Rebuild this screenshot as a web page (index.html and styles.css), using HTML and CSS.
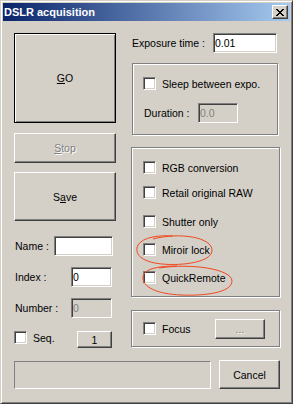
FILE: index.html
```html
<!DOCTYPE html>
<html lang="en">
<head>
    <meta charset="UTF-8">
    <title>DSLR acquisition</title>
    <link rel="stylesheet" href="styles.css">
</head>
<body>

<div class="fenster">
    <div class="titelleiste">
        <span class="titel">DSLR acquisition</span>
        <button class="schliessen" type="button">
            <svg width="8" height="7" viewBox="0 0 8 7"><path d="M0 0h2v1h-2zM6 0h2v1h-2zM1 1h2v1h-2zM5 1h2v1h-2zM2 2h4v1h-4zM3 3h2v1h-2zM2 4h4v1h-4zM1 5h2v1h-2zM5 5h2v1h-2zM0 6h2v1h-2zM6 6h2v1h-2z" fill="#000"/></svg>
        </button>
    </div>

    <div class="inhalt">
        <div class="spalten">
            <!-- linke Spalte -->
            <div class="links">
                <button class="knopf standard go" type="button"><u>G</u>O</button>
                <button class="knopf stop aus" type="button"><u>S</u>top</button>
                <button class="knopf save" type="button">S<u>a</u>ve</button>

                <div class="zeile name-zeile">
                    <label>Name :</label>
                    <input class="feld name-feld" type="text" value="">
                </div>
                <div class="zeile">
                    <label>Index :</label>
                    <input class="feld klein-feld" type="text" value="0">
                </div>
                <div class="zeile">
                    <label>Number :</label>
                    <input class="feld klein-feld aus-feld" type="text" value="0" disabled>
                </div>
                <div class="zeile seq-zeile">
                    <span class="check"></span>
                    <label class="seq-text">Seq.</label>
                    <button class="knopf eins" type="button">1</button>
                </div>
            </div>

            <!-- rechte Spalte -->
            <div class="rechts">
                <div class="zeile expo-zeile">
                    <label>Exposure time :</label>
                    <input class="feld expo-feld" type="text" value="0.01">
                </div>

                <div class="gruppe schlaf">
                    <div class="check-zeile"><span class="check"></span><label>Sleep between expo.</label></div>
                    <div class="dauer-zeile">
                        <label>Duration :</label>
                        <input class="feld dauer-feld aus-feld" type="text" value="0.0" disabled>
                    </div>
                </div>

                <div class="gruppe optionen">
                    <div class="check-zeile"><span class="check"></span><label>RGB conversion</label></div>
                    <div class="check-zeile"><span class="check"></span><label>Retail original RAW</label></div>
                    <div class="check-zeile"><span class="check"></span><label>Shutter only</label></div>
                    <div class="check-zeile"><span class="check"></span><label>Miroir lock</label></div>
                    <div class="check-zeile"><span class="check"></span><label>QuickRemote</label></div>
                    <svg class="markierung" width="149" height="150" viewBox="0 0 149 150">
                        <path d="M22 92 C48 85 82 90 81 104 C80 115 52 119 31 117 C9 115 3 106 7 98 C12 90 28 88 42 89" fill="none" stroke="#f0481e" stroke-width="1"/>
                        <path d="M28 121 C60 116 101 122 101 134 C101 146 72 149 50 148 C26 147 11 140 12 130 C13 122 26 119 46 119" fill="none" stroke="#f0481e" stroke-width="1"/>
                    </svg>
                </div>

                <div class="gruppe fokus">
                    <div class="check-zeile"><span class="check"></span><label>Focus</label></div>
                    <button class="knopf punkte aus" type="button">...</button>
                </div>
            </div>
        </div>

        <div class="unten">
            <div class="fortschritt"></div>
            <button class="knopf cancel" type="button">Cancel</button>
        </div>
    </div>
</div>

</body>
</html>
```

FILE: styles.css
```css
body {
    margin: 0;
    background: #d4d0c8;
    font-family: "Liberation Sans", Arial, sans-serif;
    font-size: 10.5px;
    color: #000;
}
.fenster {
    width: 293px;
    height: 404px;
    box-sizing: border-box;
    padding: 2px;
    background: #d4d0c8;
    border: 1px solid;
    border-color: #d4d0c8 #404040 #404040 #d4d0c8;
    box-shadow: inset 1px 1px #fff, inset -1px -1px #808080;
}
.titelleiste {
    height: 18px;
    display: flex;
    align-items: center;
    justify-content: space-between;
    padding: 0 2px 0 1px;
    background: linear-gradient(90deg, #0a246a, #a6caf0);
}
.titel {
    color: #fff;
    font-weight: bold;
    font-size: 11px;
}
.schliessen {
    width: 16px;
    height: 14px;
    padding: 0;
    display: flex;
    align-items: center;
    justify-content: center;
    background: #d4d0c8;
    border: 1px solid;
    border-color: #fff #404040 #404040 #fff;
    box-shadow: inset -1px -1px #808080;
}
.inhalt {
    padding: 12px 0 0 11px;
}
.spalten {
    display: flex;
    gap: 15px;
}
.links {
    width: 102px;
    display: flex;
    flex-direction: column;
}
.rechts {
    width: 149px;
    display: flex;
    flex-direction: column;
}

/* Knöpfe */
.knopf {
    box-sizing: border-box;
    padding: 0;
    font-family: inherit;
    font-size: 10.5px;
    color: #000;
    background: #d4d0c8;
    border: 1px solid;
    border-color: #fff #404040 #404040 #fff;
    box-shadow: inset -1px -1px #808080;
}
.knopf.standard {
    border-color: #000;
    box-shadow: inset 1px 1px #fff, inset -1px -1px #808080;
}
.knopf.aus {
    color: #808080;
    text-shadow: 1px 1px #fff;
}
.go {
    height: 90px;
}
.stop {
    height: 30px;
    margin-top: 10px;
}
.save {
    height: 49px;
    margin-top: 9px;
}
.eins {
    width: 35px;
    height: 17px;
    margin-left: auto;
    margin-right: 4px;
}
.punkte {
    width: 50px;
    height: 20px;
    margin-left: auto;
    margin-right: 14px;
}
.cancel {
    width: 61px;
    height: 29px;
}

/* Eingabefelder */
.feld {
    box-sizing: border-box;
    height: 20px;
    padding: 0 1px;
    font-family: inherit;
    font-size: 10.5px;
    color: #000;
    background: #fff;
    border: 1px solid;
    border-color: #808080 #fff #fff #808080;
    box-shadow: inset 1px 1px #404040, inset -1px -1px #d4d0c8;
    outline: none;
}
.aus-feld {
    background: #d4d0c8;
    color: #808080;
}
.zeile {
    display: flex;
    align-items: center;
}
.zeile label {
    padding-left: 1px;
}
.name-zeile {
    margin-top: 15px;
}
.zeile + .zeile {
    margin-top: 11px;
}
.zeile.seq-zeile {
    margin-top: 13px;
    align-items: flex-start;
}
.name-feld {
    width: 59px;
    margin-left: auto;
    margin-right: 3px;
}
.klein-feld {
    width: 41px;
    margin-left: auto;
    margin-right: 4px;
}
.expo-feld {
    width: 64px;
    margin-left: auto;
    margin-right: 3px;
}
.dauer-feld {
    width: 40px;
    margin-left: auto;
    margin-right: 39px;
}

/* Kontrollkästchen */
.check {
    flex: none;
    box-sizing: border-box;
    width: 13px;
    height: 13px;
    background: #fff;
    border: 1px solid;
    border-color: #808080 #fff #fff #808080;
    box-shadow: inset 1px 1px #404040, inset -1px -1px #d4d0c8;
}
.seq-text {
    margin-left: 5px;
    line-height: 15px;
}
.check-zeile {
    display: flex;
    align-items: center;
    gap: 6px;
    height: 13px;
}

/* Gruppenrahmen */
.gruppe {
    position: relative;
    box-sizing: border-box;
    border: 1px solid #808080;
    box-shadow: inset 1px 1px #fff, 1px 1px #fff;
}
.schlaf {
    width: 146px;
    height: 72px;
    margin: 10px 0 0 1px;
    padding: 13px 0 0 10px;
}
.dauer-zeile {
    display: flex;
    align-items: center;
    margin-top: 13px;
}
.dauer-zeile label {
    padding-left: 1px;
}
.optionen {
    width: 149px;
    height: 150px;
    margin-top: 12px;
    padding: 13px 0 0 11px;
}
.optionen .check-zeile:nth-child(2) {
    margin-top: 12px;
}
.optionen .check-zeile:nth-child(3) {
    margin-top: 16px;
}
.optionen .check-zeile:nth-child(4),
.optionen .check-zeile:nth-child(5) {
    margin-top: 15px;
}
.markierung {
    position: absolute;
    left: -1px;
    top: -1px;
    overflow: visible;
}
.fokus {
    width: 149px;
    height: 37px;
    margin-top: 13px;
    padding-left: 11px;
    display: flex;
    align-items: center;
}

/* untere Zeile */
.unten {
    display: flex;
    align-items: flex-end;
    gap: 8px;
    margin-top: 12px;
}
.fortschritt {
    box-sizing: border-box;
    width: 197px;
    height: 28px;
    border: 1px solid;
    border-color: #808080 #fff #fff #808080;
}
```
